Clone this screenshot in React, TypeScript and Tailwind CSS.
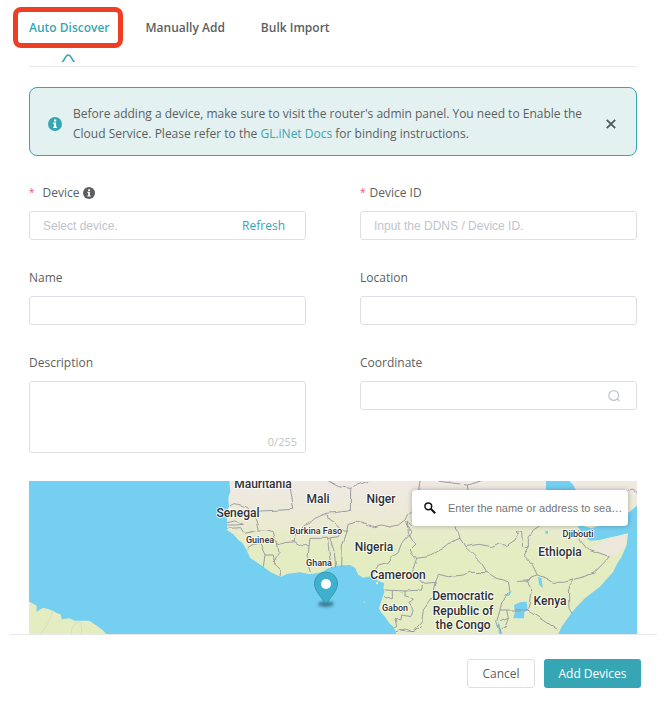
import { useState } from 'react';
import type { ReactNode } from 'react';

const tabs = ['Auto Discover', 'Manually Add', 'Bulk Import'];

const countries = [
  { name: 'Mauritania', x: 234, y: 7, size: 12 },
  { name: 'Mali', x: 289, y: 22, size: 12 },
  { name: 'Niger', x: 352, y: 22, size: 12 },
  { name: 'Senegal', x: 209, y: 36, size: 12 },
  { name: 'Burkina Faso', x: 287, y: 53, size: 9 },
  { name: 'Guinea', x: 231, y: 62, size: 9 },
  { name: 'Nigeria', x: 345, y: 70, size: 12 },
  { name: 'Ghana', x: 290, y: 85, size: 9 },
  { name: 'Cameroon', x: 369, y: 98, size: 12 },
  { name: 'Gabon', x: 366, y: 130, size: 9 },
  { name: 'Djibouti', x: 549, y: 56, size: 9 },
  { name: 'Ethiopia', x: 531, y: 75, size: 12 },
  { name: 'Kenya', x: 521, y: 124, size: 12 },
  { name: 'Democratic', x: 434, y: 119, size: 12 },
  { name: 'Republic of', x: 434, y: 134, size: 12 },
  { name: 'the Congo', x: 434, y: 148, size: 12 },
];

const InfoIcon = ({ className }: { className: string }) => (
  <svg className={className} viewBox="0 0 14 14" aria-hidden="true">
    <circle cx="7" cy="7" r="7" fill="currentColor" />
    <path d="M6 2.6h2.2v2H6zM5.2 5.6h2.9v4.2h.9v1.3H5.1V9.8H6V6.9h-.8z" fill="#fff" />
  </svg>
);

interface FieldProps {
  id: string;
  label: string;
  required?: boolean;
  info?: boolean;
  children: ReactNode;
}

const Field = ({ id, label, required, info, children }: FieldProps) => (
  <div className="min-w-0">
    <div className="mb-2 flex h-5 items-center text-xs text-[#5c5f62]">
      {required && <span className={info ? 'mr-2 text-[10px] text-[#f0527a]' : 'mr-1 text-[10px] text-[#f0527a]'}>*</span>}
      <label htmlFor={id}>{label}</label>
      {info && <InfoIcon className="ml-1 h-3 w-3 text-[#5c5f62]" />}
    </div>
    {children}
  </div>
);

const inputBox = 'flex h-[29px] items-center rounded-[3px] border border-[#dcdfe6] bg-white';
const inputText = "h-full w-full min-w-0 bg-transparent px-[13px] font-['Liberation_Sans',sans-serif] text-xs text-[#5c5f62] outline-none placeholder:text-[#c0c4cc]";

const MapView = () => (
  <svg className="block h-[153px] w-full bg-[#75cff0]" viewBox="0 0 608 153" preserveAspectRatio="xMidYMid slice" role="img" aria-label="Map">
    <defs>
      <linearGradient id="land" x1="0" y1="0" x2="0" y2="459" gradientUnits="userSpaceOnUse">
        <stop offset="0.1" stopColor="#efe9e2" />
        <stop offset="0.36" stopColor="#e9ebcd" />
        <stop offset="0.5" stopColor="#e4ecc1" />
        <stop offset="1" stopColor="#e5ecc4" />
      </linearGradient>
      <filter id="rough" x="-5%" y="-5%" width="110%" height="110%">
        <feTurbulence type="fractalNoise" baseFrequency="0.04" numOctaves="1" seed="4" />
        <feDisplacementMap in="SourceGraphic" scale="12" xChannelSelector="R" yChannelSelector="G" />
      </filter>
      <filter id="soft" x="-50%" y="-100%" width="200%" height="300%">
        <feGaussianBlur stdDeviation="1.5" />
      </filter>
    </defs>

    {/* South America */}
    <g transform="translate(-9 -6) scale(0.33333)">
      <path fill="#e4ecc1" d="M20 376 36 384 50 392 50 412 58 404 70 398 84 402 100 408 110 414 122 418 125 433 148 430 165 437 208 437 235 455 248 466 262 480 20 480Z" />
      <path fill="none" stroke="#d3d8bd" strokeWidth="2" d="M97 408Q88 450 58 478M155 478Q150 450 178 440Q188 455 184 478" />
    </g>

    {/* Africa and Arabia */}
    <g transform="translate(176 -6) scale(0.33333)">
      <path fill="url(#land)" d="M72 10 76 50 70 68 72 95 62 112 66 130 66 165 85 178 100 195 112 204 125 225 135 248 155 262 175 275 195 290 215 300 228 306 245 297 285 292 315 298 350 292 370 280 395 272 435 270 450 278 460 300 475 308 500 303 510 306 520 318 538 325 535 338 538 350 530 375 522 400 528 412 540 425 552 443 565 455 578 485 1056 485 1070 455 1095 420 1115 395 1140 370 1165 350 1185 335 1205 312 1225 290 1236 266 1250 245 1258 226 1265 210 1269 175 1235 183 1210 188 1185 195 1155 197 1140 185 1125 165 1122 150 1160 160 1220 138 1275 110 1300 88 1300 10Z" />
      <path fill="#eee8df" d="M1160 220 1200 197 1235 185 1268 176 1262 205 1234 242 1210 245Z" opacity=".85" />
      <path fill="#75cff0" d="M1023 10 1093 18 1105 30 1114 48 1125 80 1142 150 1134 164 1122 160 1085 110 1023 45Z" />
      <g fill="none" stroke="#92949d" strokeWidth="2.7" strokeLinejoin="round" filter="url(#rough)">
        <path d="M250 18 256 40 266 103 168 108 160 115 150 130M72 92 85 86 100 88 118 92 130 100 150 130 160 165 190 166 205 170 210 190 218 210 240 203 268 200 270 180 282 168 300 150 316 142 330 130 365 115 400 112 425 108 436 105 437 40" />
        <path d="M370 18 400 35 437 40 460 30 490 18M365 115 370 132 385 142 410 165 425 170 430 145 455 138 480 145 505 155 530 150 555 156 580 150 600 135 608 118 632 98" />
        <path d="M410 275 412 210 428 165M392 275 388 230 375 190M380 280 373 240 368 190M318 298 308 265 312 215 315 190 368 190 400 185 410 165M268 200 290 212 312 212" />
        <path d="M225 305 228 285 210 268 212 250 222 235 218 210M175 275 180 240 165 205 148 208 135 215 128 225M180 240 205 240 210 268M66 160 110 158 120 175 160 165M66 143 90 138 115 148 90 150 66 150" />
        <path d="M500 303 520 270 550 262 565 240 580 230 590 205 605 185 620 175 605 150 602 138M538 345 600 348 650 345 652 330M562 348 562 368 536 368M600 348 600 362 625 372 612 385 622 400 615 425 590 420 588 435 570 430 575 455 560 462M572 470 600 462 625 470 650 455" />
      </g>
      <circle cx="478" cy="382" r="2" fill="#e4ecc1" />
      <circle cx="516" cy="324" r="4" fill="#e4ecc1" />
    </g>
    <g transform="translate(371 -6) scale(0.33333)">
      <path fill="#75cff0" d="M342 390 360 382 380 380 383 405 373 412 372 430 340 430 345 412ZM414 306 424 310 429 340 418 330ZM316 364 326 354 335 348 328 362ZM294 438 299 450 305 480 297 480ZM436 167h8v9h-8z" />
      <g fill="none" stroke="#92949d" strokeWidth="2.7" strokeLinejoin="round" filter="url(#rough)">
        <path d="M35 155 22 135 25 175 45 210 30 225 50 250 38 285 45 305 65 320 75 325 105 322 115 298 145 305 190 300 205 292 262 293 290 310 325 320 385 318 395 305 412 300" />
        <path d="M50 250 85 245 130 220 155 200 180 190 195 215 225 245 245 265 262 293M180 190 175 172 165 155M195 215 240 208 275 215 295 205 320 212 345 195 355 178 348 170 365 172 368 215 385 215M385 215 370 240 395 265 412 300M385 215 385 190 400 165 420 152" />
        <path d="M412 300 440 310 460 322 490 322 520 315 580 295 610 265 628 245 560 220 540 195 535 165M520 315 505 335 507 400 516 415M395 305 380 320 395 345 383 405 430 435 475 465" />
        <path d="M105 322 95 370 70 405 65 440 40 470 0 465M325 320 330 350 305 380 300 405 290 440 305 475M300 405 383 405M300 440 325 430 320 405M305 462 318 450 325 430M110 18 202 30 204 45M202 30 245 18M60 18 56 45M685 45 700 42 711 62" />
      </g>
    </g>

    <g className="font-['Roboto',sans-serif] font-medium" textAnchor="middle" fill="#2f3136" stroke="#fff" strokeWidth="2" strokeOpacity="0.8" paintOrder="stroke" strokeLinejoin="round">
      {countries.map((country) => (
        <text key={country.name} x={country.x} y={country.y} fontSize={country.size}>
          {country.name}
        </text>
      ))}
    </g>

    <ellipse cx="297" cy="123" rx="8" ry="3" fill="#27637a" opacity="0.75" filter="url(#soft)" />
    <path d="M297 122.500C293 117 285.500 110 285.500 102.500a11.500 11.500 0 0 1 23 0C308.500 110 301 117 297 122.500Z" fill="#3fb1ce" stroke="#3598b2" strokeWidth="1" />
    <circle cx="297" cy="103" r="5" fill="#fff" />
  </svg>
);

const App = () => {
  const [activeTab, setActiveTab] = useState(tabs[0]);
  const [showNotice, setShowNotice] = useState(true);
  const [description, setDescription] = useState('');

  return (
    <div className="min-h-screen bg-white font-['Open_Sans',sans-serif] text-xs text-[#5c5f62]">
      <main className="pr-[30px] pl-[29px]">
        <nav className="flex h-[67px] items-start border-b border-[#e8e8e8] pt-[7px]">
          {tabs.map((tab, index) => (
            <button
              key={tab}
              type="button"
              onClick={() => setActiveTab(tab)}
              className={
                index === 0
                  ? 'mr-[11px] -ml-4 flex flex-col items-center font-semibold'
                  : 'mr-3 flex flex-col items-center font-semibold'
              }
            >
              <span
                className={
                  index === 0
                    ? 'flex h-[41px] items-center rounded-lg border-[5px] border-[#ee3f24] pr-2 pl-[11px] text-[#37a6b4]'
                    : 'flex h-[41px] items-center px-3'
                }
              >
                {tab}
              </span>
              {activeTab === tab && (
                <svg className="mt-1.5 h-2 w-[14px]" viewBox="0 0 14 8" fill="none" stroke="#37a6b4" strokeWidth="1.6" aria-hidden="true">
                  <path d="M1 8C4 6.500 4 1 7.300 1S10.600 6.500 13.600 8" />
                </svg>
              )}
            </button>
          ))}
        </nav>

        {showNotice && (
          <div className="mt-5 flex items-center rounded-lg border border-[#37a6b4] bg-[#e3f1f1] pt-4 pr-5 pb-[11px] pl-[18px]">
            <InfoIcon className="h-[14px] w-[14px] shrink-0 text-[#37a6b4]" />
            <p className="mr-3 ml-[11px] flex-1 leading-5">
              Before adding a device, make sure to visit the router's admin panel. You need to Enable the Cloud Service. Please refer to the{' '}
              <a href="#docs" className="text-[#37a6b4]">GL.iNet Docs</a> for binding instructions.
            </p>
            <button type="button" aria-label="Close" onClick={() => setShowNotice(false)}>
              <svg className="h-[10px] w-[10px]" viewBox="0 0 10 10" stroke="#4b5557" strokeWidth="1.700" aria-hidden="true">
                <path d="M.8.8 9.200 9.200M9.200.8.8 9.200" />
              </svg>
            </button>
          </div>
        )}

        <form className="mt-[27px] grid grid-cols-2 gap-x-[54px] gap-y-7">
          <Field id="device" label="Device" required info>
            <div className={inputBox}>
              <input id="device" className={inputText} placeholder="Select device." />
              <button type="button" className="mr-5 shrink-0 text-[#37a6b4]">Refresh</button>
            </div>
          </Field>
          <Field id="device-id" label="Device ID" required>
            <div className={inputBox}>
              <input id="device-id" className={inputText} placeholder="Input the DDNS / Device ID." />
            </div>
          </Field>
          <Field id="name" label="Name">
            <div className={inputBox}>
              <input id="name" className={inputText} />
            </div>
          </Field>
          <Field id="location" label="Location">
            <div className={inputBox}>
              <input id="location" className={inputText} />
            </div>
          </Field>
          <Field id="description" label="Description">
            <div className="relative h-[72px] rounded-[3px] border border-[#dcdfe6]">
              <textarea
                id="description"
                maxLength={255}
                value={description}
                onChange={(e) => setDescription(e.target.value)}
                className="block h-full w-full resize-none bg-transparent px-[13px] py-1 outline-none"
              />
              <span className="absolute right-2 bottom-0.5 text-[11px] leading-4 text-[#bfc2c7]">{description.length}/255</span>
            </div>
          </Field>
          <Field id="coordinate" label="Coordinate">
            <div className={inputBox}>
              <input id="coordinate" className={inputText} />
              <svg className="mr-4 h-3 w-3 shrink-0" viewBox="0 0 12 12" fill="none" stroke="#c0c4cc" strokeWidth="1.2" aria-hidden="true">
                <circle cx="5.700" cy="5.500" r="4.900" />
                <path d="M9 8.800 11.400 11" />
              </svg>
            </div>
          </Field>
        </form>

        <div className="relative mt-7">
          <MapView />
          <div className="absolute top-[9px] right-[9px] flex h-9 w-[216px] items-center rounded bg-white pr-1 pl-3 shadow-[0_0_4px_1px_rgba(0,0,0,0.2)]">
            <svg className="h-3 w-3 shrink-0" viewBox="0 0 12 12" fill="none" stroke="#111" aria-hidden="true">
              <circle cx="4.300" cy="4.300" r="3.400" strokeWidth="1.500" />
              <path d="M6.800 6.800 11.200 11.200" strokeWidth="2" />
            </svg>
            <input
              type="text"
              aria-label="Search the map"
              placeholder="Enter the name or address to search"
              className="ml-3 h-full w-full min-w-0 bg-transparent font-['Liberation_Sans',sans-serif] text-[11px] text-ellipsis outline-none placeholder:text-[#757575]"
            />
          </div>
        </div>
      </main>

      <footer className="mx-[10px] flex justify-end gap-[9px] border-t border-[#e8e8e8] px-4 pt-6">
        <button type="button" className="h-[29px] w-[68px] rounded-[3px] border border-[#dcdfe6] bg-white">Cancel</button>
        <button type="button" className="h-[29px] w-[97px] rounded-[3px] bg-[#37a6b4] text-white">Add Devices</button>
      </footer>
    </div>
  );
};

export default App;
